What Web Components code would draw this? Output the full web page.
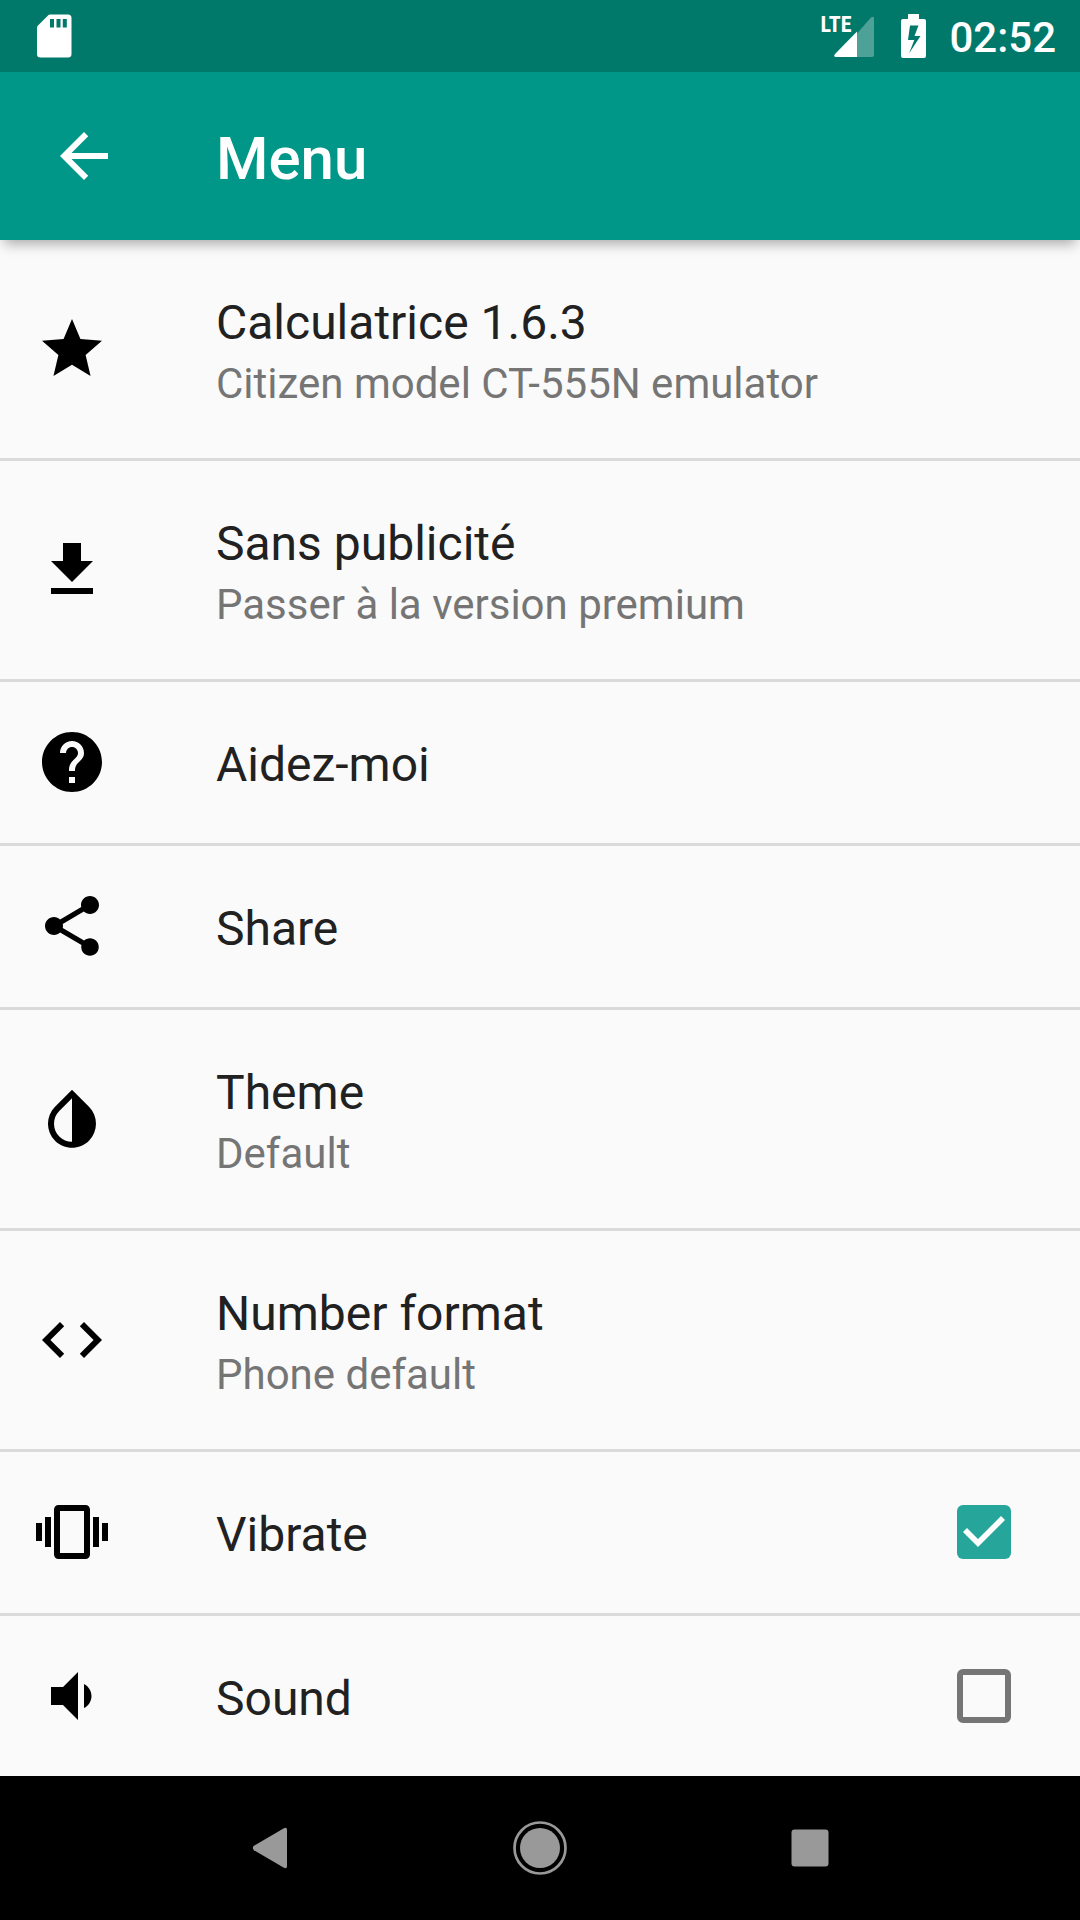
<!DOCTYPE html>
<html lang="fr">
<head>
<meta charset="utf-8">
<meta name="viewport" content="width=device-width, initial-scale=1">
<title>Menu</title>
<style>
  html, body { margin: 0; height: 100%; }
  body { font-family: Roboto, "Noto Sans", sans-serif; background: #fafafa; }
</style>
</head>
<body>
<menu-screen></menu-screen>

<script>
const define = (name, html, setup) => {
  const template = document.createElement('template');
  template.innerHTML = html;
  customElements.define(name, class extends HTMLElement {
    constructor() {
      super();
      this.attachShadow({ mode: 'open' }).append(template.content.cloneNode(true));
    }
    connectedCallback() { if (setup) setup(this, this.shadowRoot); }
  });
};

const ICONS = {
  back: 'M20 11H7.83l5.59-5.59L12 4l-8 8 8 8 1.41-1.41L7.83 13H20v-2z',
  star: 'M12 17.27L18.18 21l-1.64-7.03L22 9.24l-7.19-.61L12 2 9.19 8.63 2 9.24l5.46 4.73L5.82 21z',
  download: 'M19 9h-4V3H9v6H5l7 7 7-7zM5 18v2h14v-2H5z',
  help: 'M12 2C6.48 2 2 6.48 2 12s4.48 10 10 10 10-4.48 10-10S17.52 2 12 2zm1 17h-2v-2h2v2zm2.07-7.75l-.9.92C13.45 12.9 13 13.5 13 15h-2v-.5c0-1.1.45-2.1 1.17-2.83l1.24-1.26c.37-.36.59-.86.59-1.41 0-1.1-.9-2-2-2s-2 .9-2 2H8c0-2.21 1.79-4 4-4s4 1.79 4 4c0 .88-.36 1.68-.93 2.25z',
  share: 'M18 16.08c-.76 0-1.44.3-1.96.77L8.91 12.7c.05-.23.09-.46.09-.7s-.04-.47-.09-.7l7.05-4.11c.54.5 1.25.81 2.04.81 1.66 0 3-1.34 3-3s-1.34-3-3-3-3 1.34-3 3c0 .24.04.47.09.7L8.04 9.81C7.5 9.31 6.79 9 6 9c-1.66 0-3 1.34-3 3s1.34 3 3 3c.79 0 1.5-.31 2.04-.81l7.12 4.16c-.05.21-.08.43-.08.65 0 1.61 1.31 2.92 2.92 2.92 1.61 0 2.92-1.31 2.92-2.92s-1.31-2.92-2.92-2.92z',
  theme: 'M17.66 7.93L12 2.27 6.34 7.93c-3.12 3.12-3.12 8.19 0 11.31C7.9 20.8 9.95 21.58 12 21.58c2.05 0 4.1-.78 5.66-2.34 3.12-3.12 3.12-8.19 0-11.31zM12 19.59c-1.6 0-3.11-.62-4.24-1.76C6.62 16.69 6 15.19 6 13.59s.62-3.11 1.76-4.24L12 5.1v14.49z',
  code: 'M9.4 16.6L4.8 12l4.6-4.6L8 6l-6 6 6 6 1.4-1.4zm5.2 0l4.6-4.6-4.6-4.6L16 6l6 6-6 6-1.4-1.4z',
  vibrate: 'M0 15h2V9H0v6zm3 2h2V7H3v10zm19-8v6h2V9h-2zm-3 8h2V7h-2v10zM16.5 3h-9C6.67 3 6 3.67 6 4.5v15c0 .83.67 1.5 1.5 1.5h9c.83 0 1.5-.67 1.5-1.5v-15c0-.83-.67-1.5-1.5-1.5zM16 19H8V5h8v14z',
  sound: 'M18.5 12c0-1.77-1.02-3.29-2.5-4.03v8.05c1.48-.73 2.5-2.25 2.5-4.02zM5 9v6h4l5 5V4L9 9H5z'
};

define('app-icon', `
  <style>
    :host { display: block; flex: none; width: 72px; height: 72px; }
    svg { display: block; width: 100%; height: 100%; fill: currentColor; }
  </style>
  <svg viewBox="0 0 24 24" aria-hidden="true"><path/></svg>
`, (host, root) => root.querySelector('path').setAttribute('d', ICONS[host.getAttribute('name')]));

define('status-bar', `
  <style>
    :host { display: flex; align-items: center; flex: none; height: 72px; box-sizing: border-box;
            padding: 0 24px 0 28px; background: #00796b; color: #fff; }
    svg { display: block; flex: none; fill: currentColor; }
    .signal { position: relative; margin-left: auto; }
    .signal span { position: absolute; left: 0; top: 3px; line-height: 24px; font-size: 22px; font-weight: 700;
                   font-family: "Roboto Condensed", "Liberation Sans Narrow", "Liberation Sans", sans-serif; }
    .battery { margin: 0 23px 0 25px; }
    time { font-size: 42px; line-height: 50px; font-weight: 500; padding-top: 4px; }
  </style>
  <svg width="52" height="52" viewBox="0 0 52 52" role="img" aria-label="SD card">
    <path fill-rule="evenodd" d="M22 4.500H40a3.500 3.500 0 0 1 3.500 3.500V44a3.500 3.500 0 0 1-3.500 3.500H12.500a3.500 3.500 0 0 1-3.500-3.500V17.500q0-1 1-2L20.500 5q.6-.5 1.500-.5zM22 9v8.500h4V9zm6.500 0v8.500h4V9zm6.300 0v8.500h4V9z"/>
  </svg>
  <div class="signal"><span>LTE</span>
    <svg width="55" height="52" viewBox="0 0 55 52" role="img" aria-label="Signal">
      <path opacity=".3" d="M37 23.500 50.500 8Q53 5.500 54 8V45q0 2-2 2H37z"/>
      <path d="M37 21.500V47H16q-3-.5-1-3z"/>
    </svg>
  </div>
  <svg class="battery" width="26" height="52" viewBox="0 0 26 52" role="img" aria-label="Battery charging">
    <path fill-rule="evenodd" d="M8 4H19V9H24q2 0 2 2V46q0 2-2 2H3q-2 0-2-2V11q0-2 2-2H8zM10 15.500 8 30h6.500v-.5L9 43.500 20.500 26H14.500L18.500 15.500z"/>
  </svg>
  <time>02:52</time>
`);

define('app-bar', `
  <style>
    :host { display: flex; align-items: center; flex: none; height: 168px; box-sizing: border-box; padding: 0 48px;
            gap: 96px; background: #009688; color: #fff; z-index: 1; position: relative;
            box-shadow: 0 8px 12px -4px rgba(0, 0, 0, .32); }
    button { all: unset; display: block; cursor: pointer; }
    h1 { margin: 0; padding-top: 6px; font-size: 60px; line-height: 72px; font-weight: 500; }
  </style>
  <button type="button" aria-label="Back"><app-icon name="back"></app-icon></button>
  <h1><slot></slot></h1>
`);

const ROW_STYLE = `
  :host { display: block; flex: none; border-bottom: 3px solid #dadada; }
  .row { all: unset; display: flex; align-items: center; box-sizing: border-box; width: 100%;
         padding: 0 69px 0 36px; color: #212121; cursor: pointer; }
  ::slotted(app-icon) { color: #000; margin-bottom: 1px; }
  .text { display: block; flex: 1; min-width: 0; margin-left: 108px; padding: 51px 0 46px; }
  .title { display: block; font-size: 48px; line-height: 64px; }
`;

define('menu-item', `
  <style>
    ${ROW_STYLE}
    ::slotted([slot="detail"]) { display: block; font-size: 42px; line-height: 57px; color: #757575; }
  </style>
  <button class="row" type="button">
    <slot name="icon"></slot>
    <span class="text"><span class="title"><slot></slot></span><slot name="detail"></slot></span>
  </button>
`);

define('menu-check', `
  <style>
    ${ROW_STYLE}
    input { appearance: none; flex: none; width: 54px; height: 54px; margin: 0 0 1px; box-sizing: border-box;
            border: 6px solid #757575; border-radius: 6px; cursor: pointer; }
    input:checked { border: 0; background: #26a69a; }
    input:checked::before { content: ""; display: block; width: 54px; height: 54px; background: #fff;
            clip-path: polygon(6px 27px, 10px 23px, 21px 34px, 44px 11px, 48px 15px, 21px 42px); }
  </style>
  <label class="row" for="box">
    <slot name="icon"></slot>
    <span class="text"><span class="title"><slot></slot></span></span>
    <input id="box" type="checkbox">
  </label>
`, (host, root) => { root.querySelector('input').checked = host.hasAttribute('checked'); });

define('nav-bar', `
  <style>
    :host { display: flex; align-items: center; flex: none; height: 144px; box-sizing: border-box;
            padding: 0 12.5%; background: #000; color: #999; }
    button { all: unset; flex: 1; display: flex; justify-content: center; cursor: pointer; }
    svg { display: block; width: 60px; height: 60px; fill: currentColor; }
  </style>
  <button type="button" aria-label="Back"><svg viewBox="0 0 60 60"><path d="M43.500 10.400Q47 8.500 47 12V48Q47 51.500 43.500 49.600L14 32.200Q11.500 30 14 27.800z"/></svg></button>
  <button type="button" aria-label="Home"><svg viewBox="0 0 60 60"><circle cx="30" cy="30" r="20"/><circle cx="30" cy="30" r="25.500" fill="none" stroke="currentColor" stroke-width="2.700"/></svg></button>
  <button type="button" aria-label="Recent apps"><svg viewBox="0 0 60 60"><rect x="11.500" y="11.500" width="37" height="37" rx="3"/></svg></button>
`);

define('menu-screen', `
  <style>
    :host { display: flex; flex-direction: column; height: 100vh; overflow: hidden; }
    main { display: flex; flex-direction: column; flex: 1; min-height: 0; overflow: hidden; }
  </style>
  <status-bar></status-bar>
  <app-bar>Menu</app-bar>
  <main>
    <menu-item><app-icon slot="icon" name="star"></app-icon>Calculatrice 1.6.3<span slot="detail">Citizen model CT-555N emulator</span></menu-item>
    <menu-item><app-icon slot="icon" name="download"></app-icon>Sans publicité<span slot="detail">Passer à la version premium</span></menu-item>
    <menu-item><app-icon slot="icon" name="help"></app-icon>Aidez-moi</menu-item>
    <menu-item><app-icon slot="icon" name="share"></app-icon>Share</menu-item>
    <menu-item><app-icon slot="icon" name="theme"></app-icon>Theme<span slot="detail">Default</span></menu-item>
    <menu-item><app-icon slot="icon" name="code"></app-icon>Number format<span slot="detail">Phone default</span></menu-item>
    <menu-check checked><app-icon slot="icon" name="vibrate"></app-icon>Vibrate</menu-check>
    <menu-check><app-icon slot="icon" name="sound"></app-icon>Sound</menu-check>
  </main>
  <nav-bar></nav-bar>
`);
</script>
</body>
</html>
